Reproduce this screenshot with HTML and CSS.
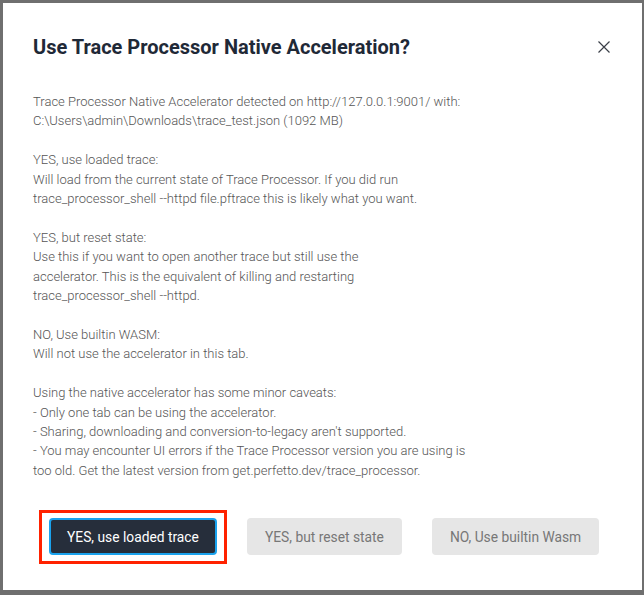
FILE: index.html
```html
<!DOCTYPE html>
<html>
<head>
<meta charset="utf-8">
<link rel="stylesheet" href="styles.css">
</head>
<body>
<div class="dialog">
  <div class="header">
    <h1 class="title">Use Trace Processor Native Acceleration?</h1>
    <button class="close" aria-label="Close">
      <svg width="14" height="14" viewBox="0 0 14 14"><path d="M1.5 1.5 L12.5 12.5 M12.5 1.5 L1.5 12.5" stroke="#3a3f48" stroke-width="1.2" fill="none"/></svg>
    </button>
  </div>
  <div class="body">Trace Processor Native Accelerator detected on http://127.0.0.1:9001/ with:
C:\Users\admin\Downloads\trace_test.json (1092 MB)

YES, use loaded trace:
Will load from the current state of Trace Processor. If you did run
trace_processor_shell --httpd file.pftrace this is likely what you want.

YES, but reset state:
Use this if you want to open another trace but still use the
accelerator. This is the equivalent of killing and restarting
trace_processor_shell --httpd.

NO, Use builtin WASM:
Will not use the accelerator in this tab.

Using the native accelerator has some minor caveats:
- Only one tab can be using the accelerator.
- Sharing, downloading and conversion-to-legacy aren't supported.
- You may encounter UI errors if the Trace Processor version you are using is
too old. Get the latest version from get.perfetto.dev/trace_processor.</div>
  <div class="actions">
    <button class="btn btn-primary">YES, use loaded trace</button>
    <button class="btn">YES, but reset state</button>
    <button class="btn">NO, Use builtin Wasm</button>
  </div>
</div>
</body>
</html>
```
FILE: styles.css
```css
html, body {
  margin: 0;
  padding: 0;
}
body {
  background: #6f6f6f;
  width: 644px;
  height: 595px;
  overflow: hidden;
  font-family: Roboto, "Liberation Sans", sans-serif;
}
.dialog {
  box-sizing: border-box;
  margin: 3px 2px 0 3px;
  height: 587px;
  background: #fff;
  padding: 24px 30px 0 30px;
  display: flex;
  flex-direction: column;
}
.header {
  display: flex;
  align-items: center;
  justify-content: space-between;
  height: 40px;
}
.title {
  margin: 0;
  font-size: 20px;
  font-weight: 700;
  color: #1f2937;
}
.close {
  border: 0;
  background: none;
  padding: 0;
  margin-right: 1px;
  width: 14px;
  height: 14px;
  display: flex;
}
.body {
  margin-top: 25px;
  white-space: pre-line;
  font-size: 13px;
  font-weight: 300;
  line-height: 19.4px;
  color: #555;
}
.actions {
  display: flex;
  gap: 30px;
  margin-top: 38px;
  padding-left: 16px;
}
.btn {
  height: 37px;
  padding: 0 16px;
  border: 2px solid transparent;
  border-radius: 4px;
  background: #e6e6e6;
  color: #777;
  font-family: Roboto, "Liberation Sans", sans-serif;
  font-size: 13.8px;
  font-weight: 400;
}
.btn-primary {
  position: relative;
  background: #262e3b;
  color: #fff;
  border-color: #1aa3ee;
}
.btn-primary::after {
  content: "";
  position: absolute;
  left: -12px;
  right: -12px;
  top: -10px;
  bottom: -11px;
  border: 3px solid #ff2200;
}
```
